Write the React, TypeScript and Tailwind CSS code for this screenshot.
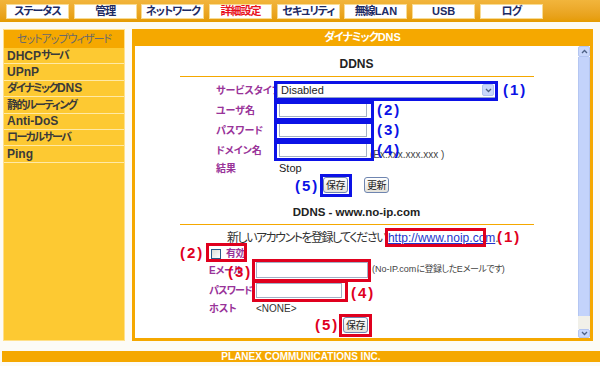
import React from 'react';

const tabs = ['ステータス', '管理', 'ネットワーク', '詳細設定', 'セキュリティ', '無線LAN', 'USB', 'ログ'];
const navItems = ['DHCPサーバ', 'UPnP', 'ダイナミックDNS', '静的ルーティング', 'Anti-DoS', 'ローカルサーバ', 'Ping'];

// ASCII runs keep the outer size; Japanese runs get their own (narrower) classes
function T({ text, cjk }: { text: string; cjk: string }) {
  const parts = text.split(/([\x00-\x7F]+)/).filter(Boolean);
  return (
    <>
      {parts.map((p, i) =>
        /^[\x00-\x7F]+$/.test(p) ? <span key={i}>{p}</span> : <span key={i} className={cjk}>{p}</span>
      )}
    </>
  );
}

function Btn({ label }: { label: string }) {
  return (
    <div className="w-[25px] h-[16px] flex items-center justify-center rounded-[3px] border border-[#6f85b0] bg-linear-to-b from-white to-[#e4e2da] text-[10px] tracking-[-0.5px] text-[#222]">
      {label}
    </div>
  );
}

function Box({ className }: { className: string }) {
  return <div className={`absolute border-[3px] ${className}`} />;
}

function Num({ n, className }: { n: number; className: string }) {
  return (
    <div className={`absolute text-[15px] font-bold leading-[16px] tracking-[2px] ${className}`}>({n})</div>
  );
}

export default function App() {
  return (
    <div className="w-[600px] h-[366px] bg-[#fcfbf6] overflow-hidden font-['Liberation_Sans','Noto_Sans_CJK_JP',sans-serif] [font-feature-settings:'palt']">
      {/* top tab bar */}
      <div className="h-[22px] bg-linear-to-b from-[#f2b53c] to-[#e59b00] flex gap-[4.7px] pl-[6px] pt-[4px]">
        {tabs.map((t) => (
          <div
            key={t}
            className={`w-[63px] h-[15px] bg-white border border-[#f8dc94] flex items-center justify-center text-[11px] font-bold whitespace-nowrap ${
              t === '詳細設定' ? 'text-[#e8101c]' : 'text-[#1d2a64]'
            }`}
          >
            <T text={t} cjk="tracking-[-1px]" />
          </div>
        ))}
      </div>

      <div className="flex pt-[7px] pl-[3px]">
        {/* left menu */}
        <div className="w-[122px] h-[312px] bg-[#fdc932] border border-[#ffe08a]">
          <div className="h-[18px] bg-[#f5a800] flex items-center justify-center text-[11px] tracking-[-1px] text-[#6a6a6a]">
            セットアップウィザード
          </div>
          {navItems.map((n) => (
            <div key={n} className="h-[16.4px] border-b border-[#ffe9a6] flex items-center pl-[3px] text-[12px] font-bold text-[#3a3a3a] whitespace-nowrap">
              <T text={n} cjk="text-[11px] tracking-[-1.6px]" />
            </div>
          ))}
        </div>

        {/* main panel */}
        <div className="ml-[7px] w-[461px] h-[312px] border-x-[3px] border-b-[3px] border-[#f5a800] flex flex-col">
          <div className="h-[17px] bg-[#f5a800] flex items-center justify-center text-[11px] font-bold text-white">
            <T text="ダイナミックDNS" cjk="tracking-[-1px]" />
          </div>
          <div className="flex-1 flex bg-white">
            <div className="flex-1 text-[11px] text-[#222]">
              <div className="w-[354px] mx-auto h-[31px] border-b border-[#f5a800] flex items-end justify-center pb-[3px] text-[12px] font-bold">
                DDNS
              </div>

              {/* DDNS form */}
              <div className="relative mt-[3px]">
                <div className="ml-[81px]">
                  <div className="h-[20px] flex items-center">
                    <div className="w-[61px] text-[10px] font-bold text-[#993399] whitespace-nowrap">サービスタイプ</div>
                    <div className="relative w-[219px] h-[15px] border border-[#8fa2c8] bg-white flex items-center justify-between pl-[3px] pr-[1px]">
                      <span className="text-[11px]">Disabled</span>
                      <div className="w-[12px] h-[12px] rounded-[2px] bg-[#c9d7fb] border border-[#b1c3ef] flex items-center justify-center">
                        <svg width="7" height="5" viewBox="0 0 7 5"><path d="M1 1l2.5 2.5L6 1" stroke="#4d6185" strokeWidth="1.3" fill="none" /></svg>
                      </div>
                    </div>
                  </div>
                  {['ユーザ名', 'パスワード', 'ドメイン名'].map((l) => (
                    <div key={l} className="h-[20px] flex items-center">
                      <div className="w-[61px] text-[10px] font-bold text-[#993399] whitespace-nowrap">{l}</div>
                      <div className="ml-[2px] w-[88px] h-[14px] border border-[#a3b0c6]" />
                    </div>
                  ))}
                  <div className="h-[16px] flex items-center">
                    <div className="w-[63px] text-[10px] font-bold text-[#993399]">結果</div>
                    <div className="text-[11px]">Stop</div>
                  </div>
                  <div className="h-[18px] flex items-center">
                    <div className="ml-[107px]"><Btn label="保存" /></div>
                    <div className="ml-[16px]"><Btn label="更新" /></div>
                  </div>
                </div>

                <div className="absolute left-[235px] top-[67px] text-[10px] text-[#444] whitespace-nowrap">(Ex:xxx.xxx.xxx )</div>
                <Box className="left-[139px] top-[1px] w-[224px] h-[20px] border-[#0c12e6]" />
                <Box className="left-[139px] top-[21px] w-[100px] h-[20px] border-[#0c12e6]" />
                <Box className="left-[139px] top-[41px] w-[100px] h-[20px] border-[#0c12e6]" />
                <Box className="left-[139px] top-[61px] w-[100px] h-[20px] border-[#0c12e6]" />
                <Box className="left-[185px] top-[94px] w-[32px] h-[23px] border-[#0c12e6]" />
                <Num n={1} className="left-[368px] top-[2px] text-[#0c12e6]" />
                <Num n={2} className="left-[242px] top-[22px] text-[#0c12e6]" />
                <Num n={3} className="left-[242px] top-[42px] text-[#0c12e6]" />
                <Num n={4} className="left-[242px] top-[62px] text-[#0c12e6]" />
                <Num n={5} className="left-[160px] top-[98px] text-[#0c12e6]" />
              </div>

              <div className="w-[354px] mx-auto h-[31px] border-b border-[#f5a800] flex items-end justify-center pb-[3px] text-[11.5px] font-bold">
                DDNS - www.no-ip.com
              </div>

              {/* no-ip form */}
              <div className="relative mt-[3px]">
                <div className="h-[19px] flex items-center pl-[92px] whitespace-nowrap">
                  <span className="text-[12px] tracking-[-1.5px] text-[#333]">新しいアカウントを登録してください</span>
                  <span className="ml-[2px] text-[12px] text-[#2233cc] underline">http://www.noip.com</span>
                  <span className="text-[12px] text-[#555]">.</span>
                </div>
                <div className="h-[13px] flex items-center pl-[76px]">
                  <div className="w-[10px] h-[10px] border border-[#2a5a8a] bg-linear-to-br from-[#dcdcd6] to-white" />
                  <span className="ml-[5px] text-[10px] font-bold tracking-[-0.5px] text-[#993399]">有効</span>
                </div>
                <div className="h-[20px] flex items-center pl-[74px]">
                  <div className="w-[47px] text-[10px] font-bold text-[#993399] whitespace-nowrap">
                    <T text="Eメール" cjk="tracking-[-0.5px]" />
                  </div>
                  <div className="w-[112px] h-[16px] border border-[#a3b0c6]" />
                  <span className="ml-[4px] text-[9px] text-[#444] whitespace-nowrap">
                    <T text="(No-IP.comに登録したEメールです)" cjk="tracking-[-0.5px]" />
                  </span>
                </div>
                <div className="h-[21px] flex items-center pl-[74px]">
                  <div className="w-[47px] text-[10px] font-bold tracking-[-0.8px] text-[#993399] whitespace-nowrap">パスワード</div>
                  <div className="w-[86px] h-[15px] border border-[#a3b0c6]" />
                </div>
                <div className="h-[14px] flex items-center pl-[74px]">
                  <div className="w-[47px] text-[10px] font-bold text-[#993399]">ホスト</div>
                  <span className="text-[10px] text-[#333]">&lt;NONE&gt;</span>
                </div>
                <div className="h-[20px] flex items-center pl-[208px]">
                  <Btn label="保存" />
                </div>

                <Box className="left-[250px] top-0 w-[101px] h-[19px] border-[#e0001e]" />
                <Box className="left-[71px] top-[15px] w-[41px] h-[19px] border-[#e0001e]" />
                <Box className="left-[117px] top-[31px] w-[119px] h-[23px] border-[#e0001e]" />
                <Box className="left-[117px] top-[52px] w-[96px] h-[22px] border-[#e0001e]" />
                <Box className="left-[204px] top-[86px] w-[33px] h-[23px] border-[#e0001e]" />
                <Num n={1} className="left-[362px] top-[1px] text-[#e0001e]" />
                <Num n={2} className="left-[45px] top-[17px] text-[#e0001e]" />
                <Num n={3} className="left-[93px] top-[36px] text-[#e0001e]" />
                <Num n={4} className="left-[216px] top-[57px] text-[#e0001e]" />
                <Num n={5} className="left-[180px] top-[89px] text-[#e0001e]" />
              </div>
            </div>

            {/* scrollbar */}
            <div className="w-[12px] flex flex-col">
              <div className="h-[11px] rounded-[2px] bg-[#c9d7fb] border border-[#b3c5f1] flex items-center justify-center">
                <svg width="7" height="5" viewBox="0 0 7 5"><path d="M1 4l2.5-2.5L6 4" stroke="#4d6185" strokeWidth="1.3" fill="none" /></svg>
              </div>
              <div className="flex-1 bg-[#c3d3fb] border-x border-[#b4c6f2]" />
              <div className="h-[13px] bg-[#f1f0e9]" />
              <div className="h-[9px] rounded-[2px] bg-[#c9d7fb] border border-[#b3c5f1] flex items-center justify-center">
                <svg width="7" height="5" viewBox="0 0 7 5"><path d="M1 1l2.5 2.5L6 1" stroke="#4d6185" strokeWidth="1.3" fill="none" /></svg>
              </div>
            </div>
          </div>
        </div>
      </div>

      {/* footer */}
      <div className="mt-[10px] ml-[2px] h-[11px] bg-[#f5a800] flex items-center justify-center text-[10px] font-bold text-white">
        PLANEX COMMUNICATIONS INC.
      </div>
    </div>
  );
}
